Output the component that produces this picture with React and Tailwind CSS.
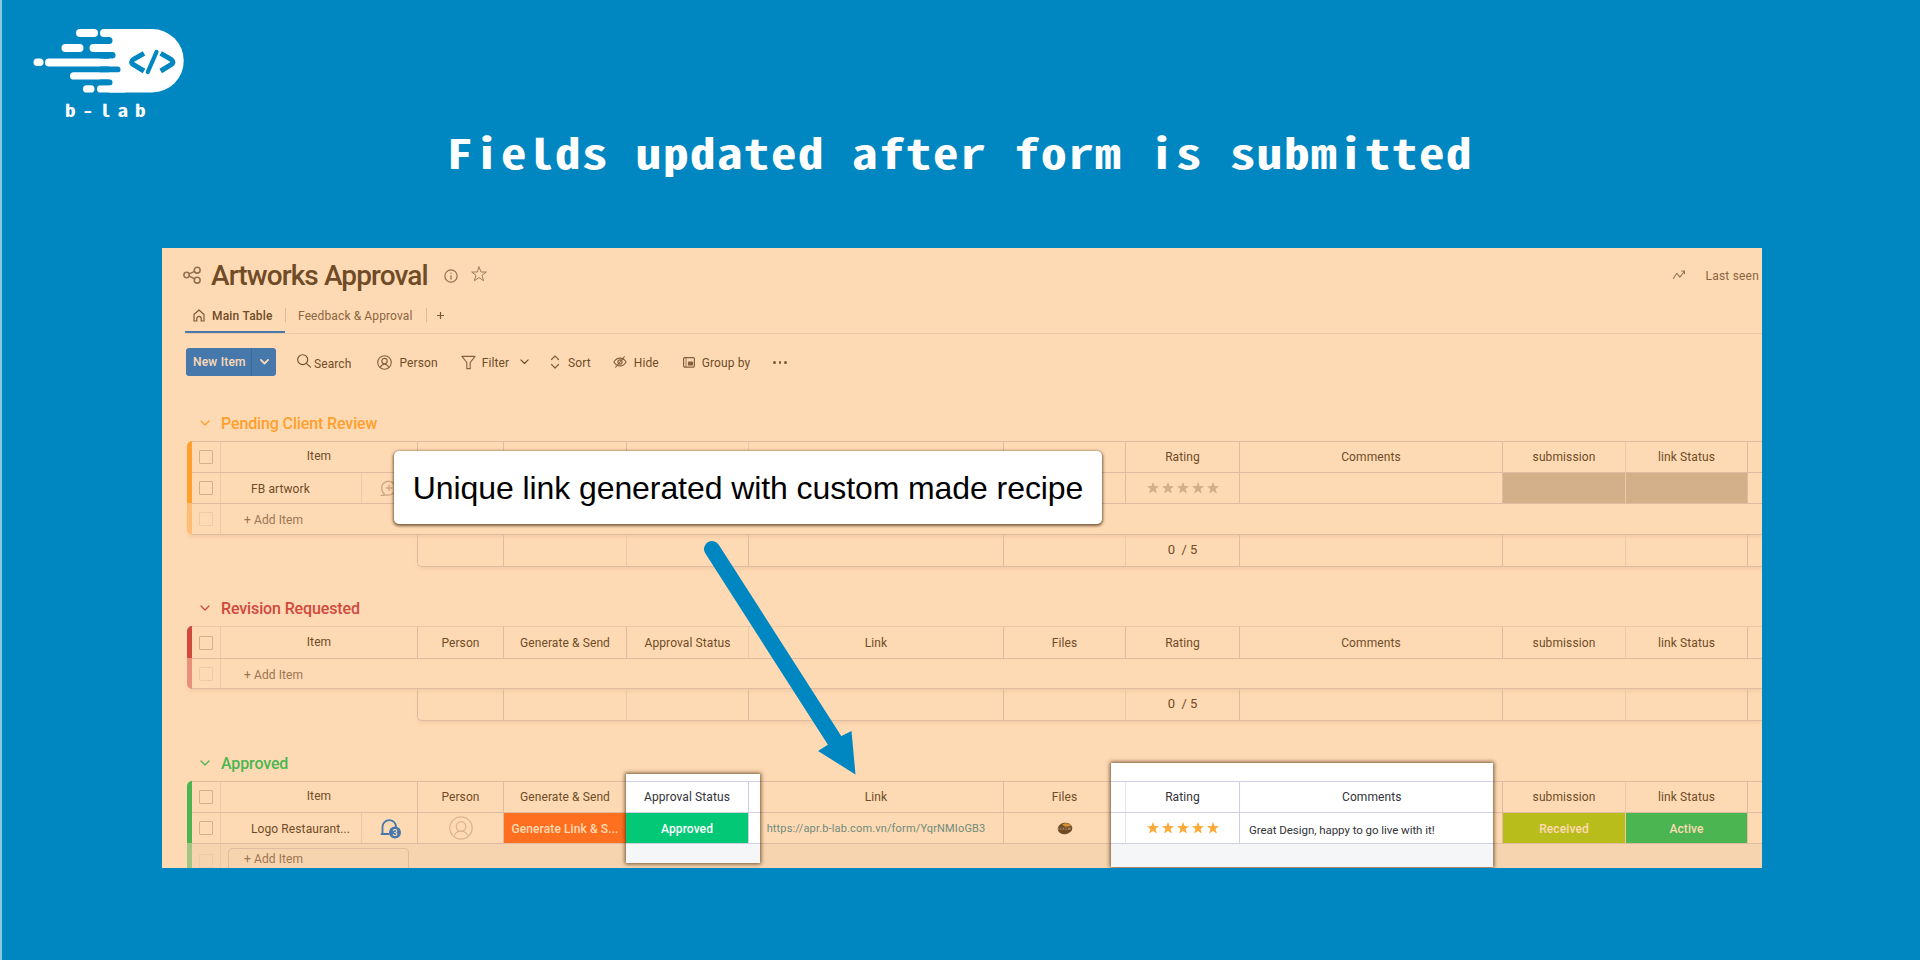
import React from "react";

const MONO = "font-['Noto_Sans_Mono_CJK_SC','Noto_Sans_Mono_CJK_JP','DejaVu_Sans_Mono',monospace]";
const COLS = "grid grid-cols-[5px_29px_197px_86px_123px_122px_255px_122px_114px_263px_123px_122px_1fr]";
const LINE = "border-[#dfbba2]";
const SOFT = "border-[#eccaa8]";

function Logo() {
  return (
    <svg width="190" height="100" viewBox="0 0 190 100" className="block">
      <g fill="#fff">
        <path d="M109 29H152a31.75 31.75 0 0 1 0 63.5H109z" />
        <rect x="76" y="29" width="22" height="8" rx="4" />
        <rect x="100" y="29" width="30" height="8" rx="4" />
        <rect x="61.5" y="44" width="22" height="8" rx="4" />
        <rect x="89.5" y="44" width="30" height="8" rx="4" />
        <rect x="33.5" y="58.5" width="10" height="7.5" rx="3.75" />
        <rect x="45" y="58.5" width="80" height="8" rx="4" />
        <rect x="70" y="72.3" width="60" height="7.2" rx="3.6" />
        <rect x="83" y="85.3" width="11.5" height="7.2" rx="3.6" />
        <rect x="97" y="85.3" width="30" height="7.2" rx="3.6" />
      </g>
      <g fill="#0087c1">
        <rect x="98" y="37" width="14.5" height="7" rx="3.5" />
        <rect x="98" y="52" width="17.5" height="6.5" rx="3.25" />
        <rect x="98" y="66.5" width="22.5" height="5.8" rx="2.9" />
        <rect x="98" y="79.5" width="14.5" height="5.8" rx="2.9" />
        <rect x="104" y="37" width="5" height="7" />
        <rect x="104" y="52" width="5" height="6.5" />
      </g>
      <g fill="none" stroke="#0087c1" strokeWidth="5">
        <path d="M144 53.300L133.500 59.300Q129.500 62 133.500 64.700L144 71" />
        <path d="M160.700 53.300L171 59.300Q175 62 171 64.700L160.700 71" />
        <path d="M156.500 52L147.800 72" strokeWidth="4.200" strokeLinecap="round" />
      </g>
    </svg>
  );
}

function Chevron({ className = "", w = 9, sw = 1.3 }) {
  return (
    <svg width={w} height={w * 0.6} viewBox="0 0 10 6" className={className} fill="none" stroke="currentColor" strokeWidth={sw} strokeLinecap="round" strokeLinejoin="round">
      <path d="M1 1l4 4 4-4" />
    </svg>
  );
}

function Icon({ w = 16, h = w, vb = "0 0 16 16", sw = 1.2, className = "", children }) {
  return (
    <svg width={w} height={h} viewBox={vb} className={`shrink-0 ${className}`} fill="none" stroke="currentColor" strokeWidth={sw} strokeLinecap="round" strokeLinejoin="round">
      {children}
    </svg>
  );
}

function Stars({ className }) {
  return (
    <span className={`flex gap-[3px] ${className}`}>
      {[0, 1, 2, 3, 4].map((i) => (
        <svg key={i} width="12" height="12" viewBox="0 0 12 12" fill="currentColor">
          <path d="M6 0l1.600 4 4.400.25-3.400 2.750L9.800 11.500 6 9.100 2.200 11.500l1.200-4.500L0 4.250 4.400 4z" />
        </svg>
      ))}
    </span>
  );
}

function Check({ faint }) {
  return <span className={`h-[14px] w-[14px] rounded-[1px] border ${faint ? "border-[#efcba5]" : "border-[#d5b08b]"}`} />;
}

function Cell({ soft, className = "", children }) {
  return <div className={`flex items-center justify-center overflow-hidden whitespace-nowrap border-r ${soft ? SOFT : LINE} ${className}`}>{children}</div>;
}

function HeaderRow({ bar, h, labels, topLine = LINE }) {
  const [person, gen, approval, link, files, rating, comments, sub, status] = labels;
  return (
    <div className={`${COLS} ${h}`}>
      <div className={`${bar} rounded-tl-[5px]`} />
      <div className={`col-span-12 grid grid-cols-subgrid border-t ${topLine}`}>
        <Cell soft><Check /></Cell>
        <Cell className="pb-[2px]">Item</Cell>
        <Cell>{person}</Cell>
        <Cell>{gen}</Cell>
        <Cell soft>{approval}</Cell>
        <Cell>{link}</Cell>
        <Cell>{files}</Cell>
        <Cell>{rating}</Cell>
        <Cell>{comments}</Cell>
        <Cell soft>{sub}</Cell>
        <Cell>{status}</Cell>
      </div>
    </div>
  );
}

function AddRow({ bar, h, boxed }) {
  return (
    <div className={`${COLS} ${h} ${boxed ? "" : "shadow-[0_3px_4px_-1px_rgba(150,90,40,0.12)]"}`}>
      <div className={`${bar} ${boxed ? "" : "rounded-bl-[5px]"}`} />
      <div className={`col-span-12 grid grid-cols-subgrid border-t ${LINE} ${boxed ? "bg-[#f7d4b0]" : "border-b bg-[#fedab4]"}`}>
        <Cell soft><Check faint /></Cell>
        <div className="col-span-2 flex items-center text-[#9c7450]">
          {boxed ? (
            <div className={`ml-[7px] mt-[4px] flex h-[30px] w-[181px] self-start rounded-t-[4px] border pl-[15px] pt-[1px] ${LINE}`}>+ Add Item</div>
          ) : (
            <span className="pl-[23px] pt-[2px]">+ Add Item</span>
          )}
        </div>
      </div>
    </div>
  );
}

function SummaryRow() {
  return (
    <div className="flex">
      <div className="w-[230px] shrink-0" />
      <div className={`grid h-[32px] flex-1 grid-cols-[86px_123px_122px_255px_122px_114px_263px_123px_122px_1fr] rounded-bl-[5px] border-b border-l shadow-[0_3px_4px_-1px_rgba(150,90,40,0.12)] ${LINE}`}>
        <Cell /><Cell soft /><Cell /><Cell /><Cell soft />
        <Cell className="pb-[2px] text-[13px] tracking-[0]">0&nbsp; / 5</Cell>
        <Cell /><Cell soft /><Cell />
      </div>
    </div>
  );
}

function GroupTitle({ className, children }) {
  return (
    <div className={`flex h-[24px] items-center pl-[38px] text-[16px] font-medium tracking-[-0.13px] ${className}`}>
      <Chevron w={10} />
      <span className="ml-[11px] whitespace-nowrap pt-[2px]">{children}</span>
    </div>
  );
}

const ALL = ["Person", "Generate & Send", "Approval Status", "Link", "Files", "Rating", "Comments", "submission", "link Status"];
const FIRST = ["", "", "", "", "", "Rating", "Comments", "submission", "link Status"];
const LAST = ["Person", "Generate & Send", "", "Link", "Files", "", "", "submission", "link Status"];

function Board() {
  return (
    <section className="relative h-[620px] w-[1600px] overflow-hidden bg-[#fedab4] font-['Roboto',sans-serif] text-[12px] tracking-[0.1px] text-[#6f4c27]">
      <div className="flex h-[54px] items-center pl-[21px]">
        <Icon w={18} className="text-[#957050]" sw={1.4}>
          <circle cx="3.200" cy="8" r="2.400" /><circle cx="12.600" cy="3.700" r="2.600" /><circle cx="12.600" cy="12.600" r="2.600" />
          <path d="M5.500 7l4.800-2.200M5.500 9l4.800 2.400" />
        </Icon>
        <h2 className="ml-[10px] whitespace-nowrap pt-px text-[28px] font-medium tracking-[-0.9px]">Artworks Approval</h2>
        <Icon w={14} className="ml-[16px] mt-px text-[#957050]" sw={1.4}>
          <circle cx="8" cy="8" r="7" /><path d="M8 7.500v4M8 4.600v.3" />
        </Icon>
        <Icon w={16} className="ml-[13px] mt-[-3px] text-[#957050]" sw={0.9}>
          <path d="M8 1l2 5h5.300l-4.300 3.300 1.600 5.400L8 11.600l-4.600 3.100L5 9.300.7 6H6z" />
        </Icon>
        <Icon w={14} className="ml-auto mr-[20px] text-[#957050]" sw={1.2}>
          <path d="M1.500 12l4-6 3.500 4.500L14 4M11 3.500h3.300v3" />
        </Icon>
        <span className="mr-[3px] pt-px tracking-[0.2px] text-[#8a6541]">Last seen</span>
      </div>

      <div className="ml-[23px] flex h-[32px] items-stretch border-b border-[#eccaa8]">
        <div className="flex w-[100px] items-center border-b-2 border-[#4678ac] pb-[2px] pl-[8px]">
          <Icon w={12} h={13} vb="0 0 12 13" className="text-[#7d5935]" sw={1.2}>
            <path d="M1 5.500L6 1l5 4.500V12H8.200V9.500a2.200 2.200 0 0 0-4.400 0V12H1z" />
          </Icon>
          <span className="ml-[7px] whitespace-nowrap font-medium tracking-[0.2px]">Main Table</span>
        </div>
        <span className="mt-[6px] h-[14px] w-px bg-[#dfbb95]" />
        <span className="ml-[12px] mt-[5px] whitespace-nowrap text-[#8a6541] tracking-[0.12px]">Feedback &amp; Approval</span>
        <span className="ml-[13px] mt-[6px] h-[14px] w-px bg-[#dfbb95]" />
        <Icon w={7} h={7} vb="0 0 7 7" className="ml-[10px] mt-[10px] text-[#7d5935]"><path d="M3.500.3v6.400M.3 3.500h6.400" /></Icon>
      </div>

      <div className="ml-[24px] mt-[14px] flex h-[28px] items-center">
        <div className="flex h-[28px] w-[90px] items-stretch overflow-hidden rounded-[3px] bg-[#4678ac] text-[#fedab4]">
          <span className="flex w-[66px] items-center whitespace-nowrap border-r border-[#3d6996] pb-px pl-[7px] font-medium tracking-[0.2px]">New Item</span>
          <span className="flex flex-1 items-center justify-center"><Chevron w={9} sw={2} /></span>
        </div>
        <Icon w={14} className="ml-[21px] mt-[-2px]" sw={1.300}><circle cx="6.500" cy="6.500" r="5.700" /><path d="M11 11l4.500 4" /></Icon>
        <span className="ml-[3px] mt-[3px]">Search</span>
        <Icon w={15} className="ml-[26px] text-[#84603c]"><circle cx="8" cy="8" r="7.200" /><circle cx="8" cy="6.500" r="2.900" /><path d="M3.500 13c1-2.300 2.600-3.200 4.500-3.200s3.500.9 4.500 3.200" /></Icon>
        <span className="ml-[7px] mt-px">Person</span>
        <Icon w={15} className="ml-[23px] text-[#84603c]"><path d="M1 1.500h14l-5.200 6.500v6.500H6.200V8z" /></Icon>
        <span className="ml-[6px] mt-px">Filter</span>
        <Chevron w={9} className="ml-[11px]" />
        <Icon w={10} h={14} vb="0 0 10 14" className="ml-[21px] text-[#84603c]" sw={1.2}><path d="M1.500 4.500L5 1l3.500 3.500M1.500 9.500L5 13l3.500-3.500" /></Icon>
        <span className="ml-[8px] mt-px">Sort</span>
        <Icon w={14} h={12} vb="0 0 16 13" className="ml-[22px] text-[#84603c]" sw={1.3}><path d="M1 6.500C3 3 5.300 2 8 2s5 1 7 4.500C13 10 10.700 11 8 11s-5-1-7-4.500zM3 12.500L13 .5" /><circle cx="8" cy="6.500" r="2.400" /></Icon>
        <span className="ml-[7px] mt-px">Hide</span>
        <Icon w={12} h={11} vb="0 0 12 11" className="ml-[24px] text-[#84603c]" sw={1.2}><rect x=".6" y=".6" width="10.800" height="9.500" rx="1" /><path d="M3 1v9" strokeWidth=".8" /><path d="M5.500 5h4v3h-4z" fill="currentColor" /></Icon>
        <span className="ml-[7px] mt-px">Group by</span>
        <span className="ml-[23px] mt-px flex gap-[3px]">
          {[0, 1, 2].map((i) => <i key={i} className="h-[2.500px] w-[2.500px] rounded-full bg-[#7d5935]" />)}
        </span>
      </div>

      <GroupTitle className="mt-[35px] text-[#fea02d]">Pending Client Review</GroupTitle>
      <div className="ml-[25px] mt-[6px]">
        <HeaderRow bar="bg-[#fea02d]" h="h-[31px]" labels={FIRST} />
        <div className={`${COLS} h-[31px]`}>
          <div className="bg-[#fea02d]" />
          <div className={`col-span-12 grid grid-cols-subgrid border-t ${LINE}`}>
            <Cell soft><Check /></Cell>
            <Cell className="!justify-start">
              <span className={`flex h-full w-[141px] items-center border-r pl-[30px] pt-px ${SOFT}`}>FB artwork</span>
              <Icon w={17} className="ml-[18px] text-[#d0a883]" sw={1.300}><path d="M1 14.500h1.800L4 12.800A6.500 6.500 0 1 1 6.500 14L3 14.500zM8.500 5v5M6 7.500h5" /></Icon>
            </Cell>
            <Cell /><Cell /><Cell soft /><Cell /><Cell />
            <Cell><Stars className="text-[#d3ae87]" /></Cell>
            <Cell />
            <Cell soft className="bg-[#d3b08a]" />
            <Cell className="bg-[#d3b08a]" />
          </div>
        </div>
        <AddRow bar="bg-[#febd74]" h="h-[32px]" />
        <SummaryRow />
      </div>

      <GroupTitle className="mt-[29px] text-[#d0493d]">Revision Requested</GroupTitle>
      <div className="ml-[25px] mt-[6px]">
        <HeaderRow bar="bg-[#d0493d]" h="h-[32px]" labels={ALL} topLine={SOFT} />
        <AddRow bar="bg-[#e7917a]" h="h-[31px]" />
        <SummaryRow />
      </div>

      <GroupTitle className="mt-[30px] text-[#4bb552]">Approved</GroupTitle>
      <div className="ml-[25px] mt-[6px]">
        <HeaderRow bar="bg-[#4bb552]" h="h-[31px]" labels={LAST} />
        <div className={`${COLS} h-[31px]`}>
          <div className="bg-[#4bb552]" />
          <div className={`col-span-12 grid grid-cols-subgrid border-t ${LINE}`}>
            <Cell soft><Check /></Cell>
            <Cell className="!justify-start">
              <span className={`flex h-full w-[141px] items-center border-r pl-[30px] pt-px ${SOFT}`}>Logo Restaurant...</span>
              <span className="ml-[18px] text-[#4678ac]">
                <svg width="22" height="21" viewBox="0 0 22 21">
                  <path d="M2.500 15.500V9a6.800 6.800 0 0 1 13.600 0v4M1.500 16h7" fill="none" stroke="currentColor" strokeWidth="1.800" strokeLinecap="round" />
                  <circle cx="15" cy="14.500" r="6" fill="currentColor" />
                  <text x="15" y="18" textAnchor="middle" fontSize="9.500" fontWeight="500" fill="#fedab4">3</text>
                </svg>
              </span>
            </Cell>
            <Cell>
              <Icon w={24} vb="0 0 24 24" className="text-[#dcb48c]" sw={1.200}><circle cx="12" cy="12" r="11.200" /><circle cx="12" cy="10.500" r="4.800" /><path d="M5.500 19c1.300-2.500 3.500-4 6.500-4s5.200 1.500 6.500 4" /></Icon>
            </Cell>
            <Cell className="bg-[#ff6f20] pt-px font-medium text-[#fedab4]">Generate Link &amp; S...</Cell>
            <Cell soft />
            <Cell className="text-[11px] tracking-[0.15px] text-[#6f8b7c]"><span className="pt-[3px]">https://apr.b-lab.com.vn/form/YqrNMIoGB3</span></Cell>
            <Cell>
              <svg width="16" height="13" viewBox="0 0 16 13">
                <ellipse cx="8" cy="6.500" rx="7.300" ry="5.800" transform="rotate(-8 8 6.500)" fill="#6f4c27" />
                <path d="M5 2.500Q11-.5 14.500 4L8 4.800z" fill="#d58f35" />
                <path d="M.8 5.800h13.500l-1 2H1.500z" fill="#a88660" />
                <path d="M2 6.800h10" stroke="#4a2e12" strokeDasharray="1.500 1" />
              </svg>
            </Cell>
            <Cell /><Cell />
            <Cell soft className="bg-[#b9bd1b] pt-px font-medium text-[#fedab4]">Received</Cell>
            <Cell className="bg-[#4bb552] pt-px font-medium text-[#fedab4]">Active</Cell>
          </div>
        </div>
        <AddRow bar="bg-[#a1c583]" h="h-[33px]" boxed />
      </div>

      {/* Spotlight over the approval status column */}
      <div className="absolute left-[464px] top-[526px] flex h-[89px] w-[134px] flex-col bg-white text-[#323338] shadow-[0_0_4px_1px_rgba(70,40,10,0.75)]">
        <div className="h-[7px]" />
        <div className="flex h-[31px] border-t border-[#cfcfe6]">
          <span className="flex w-[123px] items-center justify-center border-r border-[#cfcfe6]">Approval Status</span>
        </div>
        <div className="flex h-[31px] border-t border-[#cfcfe6]">
          <span className="flex w-[123px] items-center justify-center border-r border-[#cfcfe6] bg-[#03c977] pt-px font-medium text-white">Approved</span>
        </div>
        <div className="flex-1 border-t border-[#cfcfe6] bg-[#f4f6f8]" />
      </div>

      {/* Spotlight over the rating and comments columns */}
      <div className="absolute left-[949px] top-[515px] flex h-[104px] w-[382px] flex-col bg-white text-[#323338] shadow-[0_0_4px_1px_rgba(70,40,10,0.75)]">
        <div className="h-[18px]" />
        <div className="grid h-[31px] grid-cols-[15px_114px_1fr] border-t border-[#cfcfe6]">
          <span className="border-r border-[#e3e4ee]" />
          <span className="flex items-center justify-center border-r border-[#cfcfe6]">Rating</span>
          <span className="flex items-center pl-[102px]">Comments</span>
        </div>
        <div className="grid h-[31px] grid-cols-[15px_114px_1fr] border-t border-[#cfcfe6]">
          <span className="border-r border-[#e3e4ee]" />
          <span className="flex items-center justify-center border-r border-[#cfcfe6]"><Stars className="text-[#fdab3d]" /></span>
          <span className="flex items-center pl-[9px] pt-[5px] text-[11.500px] tracking-[-0.05px]">Great Design, happy to go live with it!</span>
        </div>
        <div className="flex-1 border-t border-[#cfcfe6] bg-[#f4f6f8]" />
      </div>

      <div className="absolute left-[232px] top-[203px] flex h-[73px] w-[708px] items-center justify-center whitespace-nowrap rounded-[5px] bg-white font-['Liberation_Sans',sans-serif] text-[32px] tracking-[-0.08px] text-black shadow-[0_1px_3px_1px_rgba(70,40,10,0.7)]">
        Unique link generated with custom made recipe
      </div>

      <svg className="absolute left-[532px] top-[288px]" width="170" height="245" viewBox="0 0 170 245">
        <path d="M18 13L141 205" stroke="#0087c1" strokeWidth="16" strokeLinecap="round" />
        <path d="M161.500 238.500L124 215l9.500-6L147.500 200l10-5z" fill="#0087c1" />
      </svg>
    </section>
  );
}

export default function App() {
  return (
    <main className="relative h-[960px] w-[1920px] overflow-hidden border-l-2 border-[#8cc7e2] bg-[#0087c1] pl-[160px]">
      <div className="-ml-[162px] flex h-[126px] w-[190px] flex-col items-start">
        <Logo />
        <span className={`ml-[64.500px] origin-left scale-x-[1.25] text-[17px] font-bold leading-[20px] tracking-[5.500px] text-white ${MONO}`}>b-lab</span>
      </div>
      <h1 className={`-ml-[2px] h-[122px] w-[1600px] origin-center scale-x-[1.25] whitespace-nowrap text-center text-[41px] font-bold leading-[50px] tracking-[1.100px] text-white ${MONO}`}>Fields updated after form is submitted</h1>
      <Board />
    </main>
  );
}
